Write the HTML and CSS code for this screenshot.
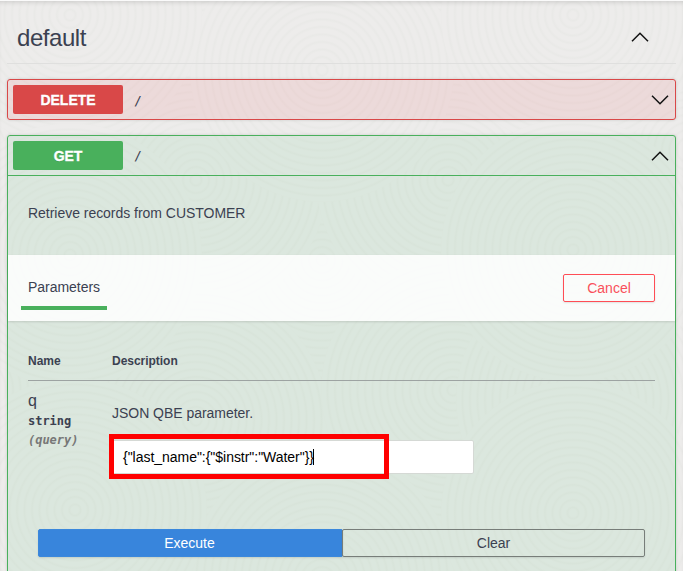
FILE: index.html
```html
<!DOCTYPE html>
<html lang="en">
<head>
<meta charset="utf-8">
<title>API</title>
<link rel="stylesheet" href="styles.css">
</head>
<body>
<svg class="texture" width="683" height="571" viewBox="0 0 683 571" aria-hidden="true">
  <defs>
    <radialGradient id="rings" gradientUnits="userSpaceOnUse" cx="0" cy="0" r="7.5" spreadMethod="repeat">
      <stop offset="0" stop-color="#edeceb"/>
      <stop offset=".45" stop-color="#edeceb"/>
      <stop offset=".75" stop-color="#e9e9e7"/>
      <stop offset="1" stop-color="#edeceb"/>
    </radialGradient>
    <circle id="disc" r="132" fill="url(#rings)"/>
  </defs>
  <rect width="683" height="571" fill="#edecea"/>
  <use href="#disc" x="-30" y="150"/><use href="#disc" x="690" y="150"/>
  <use href="#disc" x="196" y="-40"/><use href="#disc" x="448" y="-40"/>
  <use href="#disc" x="322" y="260"/><use href="#disc" x="196" y="180"/><use href="#disc" x="448" y="180"/>
  <use href="#disc" x="322" y="70"/><use href="#disc" x="70" y="15"/><use href="#disc" x="573" y="15"/>
  <use href="#disc" x="-30" y="390"/><use href="#disc" x="196" y="420"/><use href="#disc" x="453" y="390"/><use href="#disc" x="588" y="400"/>
  <use href="#disc" x="70" y="255"/><use href="#disc" x="573" y="250"/>
  <use href="#disc" x="322" y="580"/><use href="#disc" x="75" y="510"/><use href="#disc" x="573" y="513"/>
</svg>
<main class="page">
  <header class="tag">
    <h3>default</h3>
    <svg class="chev" viewBox="0 0 18 10"><path d="M1 9.2 9 1.2 17 9.2"/></svg>
  </header>

  <section class="op delete">
    <div class="summary">
      <span class="method">DELETE</span><span class="path">/</span>
      <svg class="chev" viewBox="0 0 18 10"><path d="M1 .8 9 8.8 17 .8"/></svg>
    </div>
  </section>

  <section class="op get">
    <div class="summary">
      <span class="method">GET</span><span class="path">/</span>
      <svg class="chev" viewBox="0 0 18 10"><path d="M1 9.2 9 1.2 17 9.2"/></svg>
    </div>
    <p class="desc">Retrieve records from CUSTOMER</p>
    <div class="bar">
      <div class="tab">Parameters</div>
      <button class="btn cancel">Cancel</button>
    </div>
    <div class="params">
      <div class="row head"><div>Name</div><div>Description</div></div>
      <div class="row">
        <div>
          <div class="pname">q</div>
          <div class="ptype">string</div>
          <div class="pin">(query)</div>
        </div>
        <div class="pdesc">
          <p>JSON QBE parameter.</p>
          <div class="field"><span class="value">{"last_name":{"$instr":"Water"}}</span><i class="caret"></i><div class="mark"></div></div>
        </div>
      </div>
    </div>
    <div class="actions">
      <button class="btn execute">Execute</button>
      <button class="btn clear">Clear</button>
    </div>
  </section>
</main>
</body>
</html>
```

FILE: styles.css
```css
* { box-sizing: border-box; }
body {
  margin: 0;
  height: 571px;
  overflow: hidden;
  font-family: "Liberation Sans", Arial, sans-serif;
  font-size: 14px;
  letter-spacing: -.03px;
  color: #3b4151;
  background: #edecea;
}
.texture { position: absolute; inset: 0; z-index: -1; }
.page {
  height: 571px;
  padding: 0 7px;
  border-top: 1px solid #fafafa;
  box-shadow: inset 0 4px 5px -3px rgba(0,0,0,.15);
}
h3, p { margin: 0; font-weight: 400; }
.tag {
  display: flex;
  align-items: center;
  justify-content: space-between;
  height: 63px;
  padding: 10px 27px 0 10px;
  border-bottom: 1px solid #dfdfde;
  width: 669px;
}
.tag h3 { padding-top: 2px; font-size: 24px; line-height: 30px; letter-spacing: -.45px; }
.chev { width: 18px; height: 10px; fill: none; stroke: #111; stroke-width: 1.5; }
.op {
  width: 669px;
  margin-top: 15px;
  border: 1px solid;
  border-radius: 3px;
  box-shadow: 0 0 3px rgba(0,0,0,.15);
}
.op.delete { border-color: #d94848; background: rgba(235,60,70,.1); }
.op.get { border-color: #49b05c; background: rgba(73,190,110,.1); height: 460px; }
.summary { display: flex; align-items: center; height: 39px; padding: 0 6px 0 5px; }
.get .summary { height: 40px; padding-bottom: 1px; border-bottom: 1px solid #49b05c; }
.get .chev { margin-top: 2px; }
.method {
  width: 110px;
  height: 29px;
  border-radius: 2px;
  color: #fff;
  font-weight: 700;
  line-height: 30px;
  text-align: center;
  text-shadow: 0 1px 0 rgba(0,0,0,.1);
  -webkit-text-stroke: .3px #fff;
}
.delete .method { background: #d94848; }
.get .method { background: #49b05c; }
.path { flex: 1; padding: 2px 0 0 11px; font: 600 13px/16px "DejaVu Sans Mono", monospace; -webkit-text-stroke: 0; font-weight: 400; }
.desc { height: 79px; padding: 27px 20px 0; line-height: 20px; }
.bar {
  display: flex;
  align-items: center;
  justify-content: space-between;
  height: 66px;
  padding: 0 20px 0 13px;
  background: rgba(255,255,255,.85);
  box-shadow: 0 1px 2px rgba(0,0,0,.12);
}
.tab { width: 86px; height: 44px; padding: 9px 0 0 7px; line-height: 24px; align-self: flex-end; margin-bottom: 11px; border-bottom: 4px solid #49b05c; }
.btn {
  display: block;
  height: 28px;
  padding: 0;
  border: 1px solid;
  border-radius: 2px;
  background: none;
  font: 14px/26px "Liberation Sans", Arial, sans-serif;
  text-align: center;
  box-shadow: 0 1px 2px rgba(0,0,0,.1);
}
.cancel { width: 92px; border-color: #ff4d55; color: #f9505b; }
.params { padding: 20px 20px 0; }
.row { display: grid; grid-template-columns: 84px 1fr; }
.head { height: 40px; padding-top: 11px; border-bottom: 1px solid #9da3a2; font-size: 12px; line-height: 18px; font-weight: 700; }
.pname { padding-top: 10px; font-size: 16px; line-height: 20px; }
.ptype { font: 700 12px/20px "DejaVu Sans Mono", monospace; }
.pin { font: italic 700 12px/18px "DejaVu Sans Mono", monospace; color: #777; }
.pdesc p { padding-top: 22px; line-height: 20px; }
.field {
  position: relative;
  display: flex;
  align-items: center;
  width: 362px;
  height: 34px;
  margin-top: 17px;
  padding-left: 10px;
  border: 1px solid #d5d9d5;
  border-radius: 2px;
  background: #fff;
  color: #000;
}
.caret { width: 1px; height: 16px; margin-left: -1px; background: #000; }
.mark { position: absolute; left: -4px; top: -7px; width: 280px; height: 45px; border: 5px solid #f00; }
.actions { display: flex; padding: 55px 30px 0; }
.execute { width: 305px; padding-right: 2px; border-color: #3b88dc; background: #3885dc; color: #fff; }
.clear { flex: 1; margin-left: -1px; border-color: #777d79; color: #3b4151; }
```
